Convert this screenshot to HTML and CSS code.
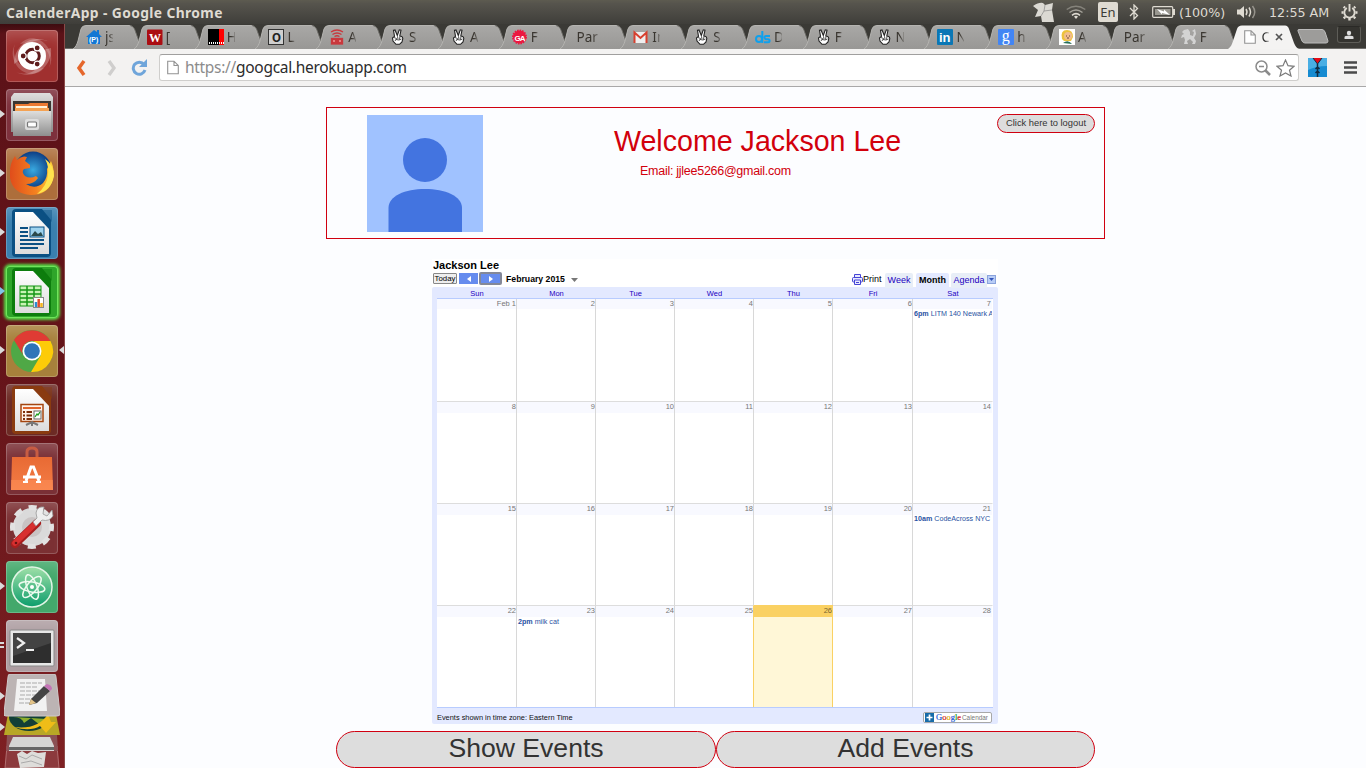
FILE: index.html
```html
<!DOCTYPE html>
<html lang="en">
<head>
<meta charset="utf-8">
<title>CalenderApp</title>
<link rel="stylesheet" href="styles.css">
</head>
<body>
<svg class="defs" width="0" height="0">
  <defs>
    <linearGradient id="tabFill" x1="0" y1="0" x2="0" y2="1"><stop offset="0" stop-color="#a9a8a6"/><stop offset="1" stop-color="#989795"/></linearGradient>
    <linearGradient id="metal" x1="0" y1="0" x2="0" y2="1"><stop offset="0" stop-color="#dededd"/><stop offset="1" stop-color="#8e8e8e"/></linearGradient>
    <linearGradient id="paper" x1="0" y1="0" x2="0" y2="1"><stop offset="0" stop-color="#fff"/><stop offset="1" stop-color="#dcdcdc"/></linearGradient>
    <linearGradient id="bag" x1="0" y1="0" x2="0" y2="1"><stop offset="0" stop-color="#e86a34"/><stop offset="1" stop-color="#f47c45"/></linearGradient>
    <linearGradient id="atom" x1="0" y1="0" x2="0" y2="1"><stop offset="0" stop-color="#9fe0a8"/><stop offset="1" stop-color="#0c9d6c"/></linearGradient>
    <linearGradient id="flame" x1="0" y1="0" x2="1" y2="0"><stop offset="0" stop-color="#e04d1b"/><stop offset=".6" stop-color="#f58220"/><stop offset="1" stop-color="#ffd83b"/></linearGradient>
    <radialGradient id="globe"><stop offset="0" stop-color="#39a9e0"/><stop offset="1" stop-color="#0d3e85"/></radialGradient>
  </defs>
  <symbol id="tab" viewBox="0 0 71 24"><path d="M0 24C3 22 4 19 5 16L8 4Q9 .5 13 .5H56Q59 .5 61 4L66 18Q68 23 71 24Z" fill="url(#tabFill)"/><path d="M0 24C3 22 4 19 5 16L8 4Q9 .5 13 .5H56Q59 .5 61 4L66 18Q68 23 71 24" fill="none" stroke="#b5b4b1" stroke-width="1"/><path d="M57 .5Q60 1 61.500 4L66.500 18Q68 22 70 24" fill="none" stroke="#6f6e6a"/></symbol>
  <symbol id="tabOn" viewBox="0 0 71 24"><path d="M0 24C3 22 4 19 5 16L9 4Q10 .5 14 .5H57Q60 .5 61 4L66 18Q68 23 71 24Z" fill="#f4f3f2"/></symbol>
  <symbol id="hand" viewBox="0 0 16 16"><path d="M3.500 1.300L5 1 7.300 6.500 9.300.8 11 1.200 9.800 7Q12.500 7 12.800 9.500L12 13 9.500 15.300H6L3 12 2.500 9 4.500 7.300Z" fill="#fff" stroke="#222" stroke-width="1.100"/><path d="M4 8.500L6.500 9.500 5 12M7.500 7.500L8 10M10 7.500L9.500 10.500M6 10.500L9 11 11.500 10" fill="none" stroke="#222" stroke-width=".8"/></symbol>
  <symbol id="page" viewBox="0 0 12 14"><path d="M.7.7H7L11.300 5V13.300H.7ZM7 .7V5H11.300" fill="#fff" stroke="#939393" stroke-width="1.100"/></symbol>
  <symbol id="doc" viewBox="0 0 52 52"><path d="M10 2H36L45 13V46Q45 50 41 50H10Q6 50 6 46V6Q6 2 10 2Z"/><path d="M33 3H46V15Z" opacity=".45"/><path d="M9 5H27L43 22V47H9Z" fill="url(#paper)"/></symbol>
</svg>

<header class="panel">
  <div class="window-title">CalenderApp - Google Chrome</div>
  <div class="tray">
    <svg class="t-note" width="22" height="20" viewBox="0 0 22 20"><path d="M0 4Q6 0 10 1L12 3 20 1 19 8 21 20 9 20 8 14 2 15 5 8Z" fill="#dbd9d3"/><path d="M12 3L11 9 19 8M11 9L8 14" fill="none" stroke="#888" stroke-width=".7"/></svg>
    <svg class="t-wifi" width="20" height="14" viewBox="0 0 20 14" fill="none"><path d="M.7 4.500Q10-2 19.300 4.500" stroke="#85837b" stroke-width="1.500"/><path d="M3.500 7.500Q10 2.500 16.500 7.500" stroke="#a5a29a" stroke-width="1.500"/><path d="M6 10.300Q10 7 14 10.300" stroke="#dfdbd2" stroke-width="1.500"/><path d="M8 11.500Q10 10 12 11.500L10 14Z" fill="#dfdbd2"/></svg>
    <span class="lang">En</span>
    <svg class="t-bt" width="10" height="16" viewBox="0 0 10 16"><path d="M1 4L8.500 11.500 5 15V1L8.500 4.500 1 12" fill="none" stroke="#dfdbd2" stroke-width="1.300"/></svg>
    <svg class="t-batt" width="24" height="12" viewBox="0 0 24 12"><rect x=".7" y=".7" width="20" height="10.600" rx="1" fill="none" stroke="#dfdbd2" stroke-width="1.200"/><rect x="3" y="3" width="15.500" height="6" fill="#99978f"/><path d="M22 3V9" stroke="#dfdbd2" stroke-width="2"/><path d="M5 3L12 5.500 12 3.500 18 9 10 7 10 8.500Z" fill="#fff"/></svg>
    <span class="batt-text">(100%)</span>
    <svg class="t-vol" width="20" height="14" viewBox="0 0 20 14"><path d="M0 4.500H3L7 1V13L3 9.500H0Z" fill="#dfdbd2"/><path d="M9 4Q11 7 9 10M12 2.500Q15 7 12 11.500" fill="none" stroke="#dfdbd2" stroke-width="1.500"/><path d="M15.500 1Q20 7 15.500 13" fill="none" stroke="#96938b" stroke-width="1.500"/></svg>
    <span class="clock">12:55 AM</span>
    <svg class="t-gear" width="17" height="17" viewBox="0 0 17 17" fill="none" stroke="#dfdbd2"><path d="M5.800 4A5.200 5.200 0 1 0 11.200 4M8.500 0V7.500" stroke-width="1.900"/><path d="M2.700 2.700L4 4M14.300 2.700L13 4M.5 8.500H2.500M14.500 8.500H16.500M2.700 14.300L4.200 12.800M14.300 14.300L12.800 12.800M8.500 14V16.500" stroke-width="2.400"/></svg>
  </div>
</header>

<div class="desktop">
  <nav class="launcher">
    <svg class="tile dash" viewBox="0 0 52 52"><path d="M8 34C8 16 24 3 44 12 28 5 15 18 15 29ZM45 18C47 36 28 51 10 42 24 48 39 37 37 20Z" fill="#fff" opacity=".25"/><path d="M14 14C28-2 53 18 43 38 48 24 36 10 21 13ZM38 38C24 54-1 34 9 14 4 28 16 42 31 39Z" fill="#fff" opacity=".2"/><circle cx="26" cy="26" r="14" fill="#fff"/><circle cx="26.500" cy="26" r="6.800" fill="none" stroke="#5e1b1c" stroke-width="3"/><g fill="#5e1b1c" stroke="#fff" stroke-width="1.200"><circle cx="17.200" cy="26" r="3"/><circle cx="31.200" cy="17.900" r="3"/><circle cx="31.200" cy="34.100" r="3"/></g></svg>
    <svg class="tile files" viewBox="0 0 52 52"><path d="M8 4H44L47 8V43H5V8Z" fill="url(#metal)"/><rect x="7" y="12" width="38" height="12" fill="#3b3732"/><path d="M9 20V15H22L24 14H42V21Z" fill="#ec7a32"/><path d="M10 17H41V21H10Z" fill="#fff3da"/><path d="M9 19H43V22H9Z" fill="#f4a253"/><path d="M7 22H45V47H7Z" fill="url(#metal)"/><rect x="19" y="30" width="14" height="11" rx="2" fill="#ddd"/><rect x="21.500" y="33" width="9" height="5" rx="1" fill="#fff" stroke="#777" stroke-width="1.200"/></svg>
    <svg class="tile firefox" viewBox="0 0 52 52"><circle cx="27" cy="22" r="18.500" fill="url(#globe)"/><path d="M4 24Q4 15 9 8L11 12Q16 7 21 9L19 13 24 17 24 20 18 21Q15 24 19 28 24 31 30 28L32 30Q28 36 20 36 29 42 37 35 42 29 41 21L45 13Q50 24 46 34 41 47 25 47 7 46 4 30Z" fill="url(#flame)"/><path d="M39 11Q48 17 48 28 45 43 31 46 41 38 42 27 43 18 39 11Z" fill="#ffe34d"/></svg>
    <svg class="tile writer" viewBox="0 0 52 52"><use href="#doc" fill="#0b5083"/><path d="M14 21H22M14 25H22M14 29H22M14 33H38M14 37H38M14 41H32" stroke="#0b5083" stroke-width="2"/><rect x="24" y="20" width="14" height="10" fill="#9fd3ee" stroke="#0b5083"/><path d="M25 29L29 24 32 27 35 25 37 29Z" fill="#2b4a4c"/></svg>
    <svg class="tile calc" viewBox="0 0 52 52"><use href="#doc" fill="#0d7d0d"/><rect x="14" y="20" width="21" height="20" fill="#c8f3b4" stroke="#159615"/><path d="M14 24H35M14 28H35M14 32H35M14 36H35M21 20V40M28 20V40" stroke="#159615" stroke-width="1.500"/><rect x="27.500" y="31.500" width="10" height="10" fill="#fff" stroke="#888"/><path d="M30 41V36" stroke="#2d8dd2" stroke-width="2.500"/><path d="M32.700 41V33" stroke="#e44b2b" stroke-width="2.500"/><path d="M35.500 41V37" stroke="#f5b51d" stroke-width="2.500"/></svg>
    <svg class="tile chrome" viewBox="0 0 52 52"><circle cx="26" cy="26" r="21" fill="#4fa846"/><path d="M8 15A21 21 0 0 1 44.200 16H26A10 10 0 0 0 17 30Z" fill="#df3b34"/><path d="M44.500 16A21 21 0 0 1 25 47L35 30Q37 20 27 16Z" fill="#fdcb08"/><circle cx="26" cy="26" r="9.500" fill="#fff"/><circle cx="26" cy="26" r="7.800" fill="#2f74b8"/></svg>
    <svg class="tile impress" viewBox="0 0 52 52"><use href="#doc" fill="#8a3b10"/><rect x="15" y="20.500" width="22" height="17" fill="#fff2e9" stroke="#a4450f" stroke-width="1.500"/><path d="M17 24H35" stroke="#df642b" stroke-width="2"/><path d="M17 28H26M17 31.500H26M17 35H26" stroke="#7d2d08" stroke-width="2" stroke-dasharray="2 1.500 6"/><rect x="28" y="27" width="7" height="8" fill="#fff" stroke="#666"/><path d="M29 33L31 30 32 31 34 28" fill="none" stroke="#20a020" stroke-width="1.300"/><path d="M20 41L26 38 32 41M26 38V42" fill="none" stroke="#777" stroke-width="2"/></svg>
    <svg class="tile software" viewBox="0 0 52 52"><path d="M21 16V9Q21 5 26 5T31 9V16" fill="none" stroke="#c75c43" stroke-width="3"/><path d="M6 14H46L47 47H5Z" fill="url(#bag)"/><path d="M5 37H47V47H5Z" fill="#ff925a" opacity=".5"/><path d="M20 38L25 24H27.500L33 38M17 34H35" fill="none" stroke="#fff" stroke-width="3"/><path d="M17 39H22M30 39H35" stroke="#fff" stroke-width="2"/></svg>
    <svg class="tile settings" viewBox="0 0 52 52"><circle cx="26" cy="25" r="13" fill="none" stroke="#dadada" stroke-width="12"/><circle cx="26" cy="25" r="19.500" fill="none" stroke="#e2e2e2" stroke-width="5" stroke-dasharray="8 7.315" stroke-dashoffset="4"/><circle cx="26" cy="25" r="10" fill="#c9c4c4"/><path d="M9 42L31 21" stroke="#a81f1f" stroke-width="8" stroke-linecap="round"/><path d="M9 41L31 20" stroke="#d83030" stroke-width="5.500" stroke-linecap="round"/><path d="M30 24L36 18Q43 20 47 14L46 8 41 14 37 12 38 5Q31 4 30 11L31 16 27 20Z" fill="#eee" stroke="#999" stroke-width=".8"/><circle cx="10" cy="41" r="1.300" fill="#611"/></svg>
    <svg class="tile atom" viewBox="0 0 52 52"><circle cx="26" cy="26" r="20" fill="url(#atom)" stroke="#e1f5e5" stroke-width="1.500"/><g fill="none" stroke="#edfbef" stroke-width="1.500"><ellipse cx="26" cy="26" rx="13" ry="5" transform="rotate(10 26 26)"/><ellipse cx="26" cy="26" rx="13" ry="5" transform="rotate(70 26 26)"/><ellipse cx="26" cy="26" rx="13" ry="5" transform="rotate(130 26 26)"/></g><circle cx="26" cy="26" r="2" fill="#fff"/></svg>
    <svg class="tile terminal" viewBox="0 0 52 52"><rect x="4" y="10" width="44" height="36" rx="1" fill="#e7e7e7" stroke="#888"/><rect x="7" y="13" width="38" height="30" fill="#2e2e2e"/><path d="M7 13H45V23L7 36Z" fill="#fff" opacity=".1"/><path d="M11 18L18 23 11 28" fill="none" stroke="#eee" stroke-width="2.200"/><path d="M20 30H28" stroke="#eee" stroke-width="2"/></svg>
    <svg class="folded" width="56" height="94" viewBox="0 0 56 94"><path d="M3 72H53L55 94H1Z" fill="#8c3a3d" stroke="#b06d6f"/><path d="M13 80L18 77 23 80 28 77 34 79 42 78 40 93 16 94Z" fill="#deddda"/><path d="M15 82L22 85 28 81 38 85M17 89L27 87 38 91" stroke="#aaa" fill="none"/><path d="M4 46H52L54 77H2Z" fill="#8b5054"/><path d="M9 63H46L50 72V77H5V72Z" fill="#d5d5d4"/><path d="M5 73H50V76H5Z" fill="#666"/><path d="M4 40H52L56 61H0Z" fill="#b8a726"/><ellipse cx="25" cy="43" rx="20" ry="14" fill="#123f37"/><path d="M9 43Q18 43 20 49L27 44 36 51 43 45Z" fill="#8dae2c"/><path d="M10 53Q34 56 44 40L47 48 52 48 42 59 36 52Q26 58 10 53Z" fill="#efbd18"/><path d="M6 0H50Q52 0 52 3L56 40Q56 42 53 42H2Q-1 42 0 39L4 3Q4 0 6 0Z" fill="#bcb4b4" stroke="#d0caca"/><path d="M13 5H41L43 37H10Z" fill="#f2f2f2"/><path d="M16 9H38M16 13H34M16 17H37M16 21H35M15 25H31M15 29H28" stroke="#aaa" stroke-width="1.200" stroke-dasharray="5 1"/><path d="M25 31L27 25 40 12 46 17 33 29Z" fill="#444"/><path d="M40 12L43 10Q48 11 48 15L46 17Z" fill="#c474b6"/><path d="M25 31L27 25 32 29Z" fill="#e4c488"/></svg>
    <svg class="marks" width="65" height="744" viewBox="0 0 65 744" fill="#dadada"><path d="M0 86L5 90 0 94ZM0 145L5 149 0 153ZM0 204L5 208 0 212ZM0 322L5 326 0 330ZM64 322L59 326 64 330ZM0 558L5 562 0 566ZM0 668L5 672 0 676ZM0 699L5 703 0 707ZM0 618H4V620H0ZM0 622H4V624H0Z"/><path d="M0 263L5 267 0 271Z" fill="#7fc6e8"/></svg>
  </nav>

  <div class="browser">
    <div class="tabs">
      <div class="tab"><svg class="shape"><use href="#tab"/></svg><svg class="fav" viewBox="0 0 16 16"><path d="M0 8L8 1 11 3V1H13V5L16 8H14V15H2V8Z" fill="#1277d4"/><text x="3" y="13" class="ico-p">(P)</text></svg><span class="label">js</span></div>
      <div class="tab"><svg class="shape"><use href="#tab"/></svg><svg class="fav" viewBox="0 0 16 16"><rect y=".5" width="15.500" height="15.500" rx="1" fill="#ab0d12"/><text x="2" y="13" class="ico-w">W</text></svg><span class="label">[</span></div>
      <div class="tab"><svg class="shape"><use href="#tab"/></svg><svg class="fav" viewBox="0 0 16 16"><path d="M0 0H11V16H0Z"/><path d="M11 0H16V16H11Z" fill="#f00"/><path d="M1 14H16" stroke="#fff" stroke-width="2" stroke-dasharray="1 1"/></svg><span class="label">H</span></div>
      <div class="tab"><svg class="shape"><use href="#tab"/></svg><svg class="fav" viewBox="0 0 16 16"><rect x=".5" y=".5" width="15" height="15" fill="#cfcfcf" stroke="#333"/><text x="4" y="13" class="ico-o">O</text></svg><span class="label">L</span></div>
      <div class="tab"><svg class="shape"><use href="#tab"/></svg><svg class="fav" viewBox="0 0 16 16" fill="none" stroke="#c9383d" stroke-width="1.300"><path d="M2 3Q8-1 14 3M3.500 5.500Q8 2.500 12.500 5.500M5.500 7.500Q8 6 10.500 7.500"/><rect x="2.500" y="9.500" width="11" height="5.500" fill="#c9383d"/><path d="M4 12H6M10 12H12" stroke="#ee9898"/></svg><span class="label">A</span></div>
      <div class="tab"><svg class="shape"><use href="#tab"/></svg><svg class="fav"><use href="#hand"/></svg><span class="label">S</span></div>
      <div class="tab"><svg class="shape"><use href="#tab"/></svg><svg class="fav"><use href="#hand"/></svg><span class="label">A</span></div>
      <div class="tab"><svg class="shape"><use href="#tab"/></svg><svg class="fav" viewBox="0 0 16 16"><circle cx="7.500" cy="8" r="6.500" fill="#ec1840" stroke="#ec1840" stroke-width="2" stroke-dasharray="1.500 1"/><text x="2.600" y="11.500" class="ico-ga">GA</text></svg><span class="label">F</span></div>
      <div class="tab no-icon"><svg class="shape"><use href="#tab"/></svg><span class="label">Par</span></div>
      <div class="tab"><svg class="shape"><use href="#tab"/></svg><svg class="fav" viewBox="0 0 16 16"><path d="M1 3H14V14H1Z" fill="#eee"/><path d="M1.500 14V3.500L7.500 9 13.500 3.500V14" fill="none" stroke="#d7402f" stroke-width="2"/></svg><span class="label">In</span></div>
      <div class="tab"><svg class="shape"><use href="#tab"/></svg><svg class="fav"><use href="#hand"/></svg><span class="label">S</span></div>
      <div class="tab"><svg class="shape"><use href="#tab"/></svg><svg class="fav" viewBox="0 0 16 16"><g fill="none" stroke="#10a0ec" stroke-width="2"><circle cx="4" cy="10" r="3"/><path d="M7.300 2V14M15 7H11Q9.500 7 9.500 8.500T11 10.300H13Q14.600 10.300 14.600 11.800T13 13.300H9"/></g></svg><span class="label">D</span></div>
      <div class="tab"><svg class="shape"><use href="#tab"/></svg><svg class="fav"><use href="#hand"/></svg><span class="label">F</span></div>
      <div class="tab"><svg class="shape"><use href="#tab"/></svg><svg class="fav"><use href="#hand"/></svg><span class="label">N</span></div>
      <div class="tab"><svg class="shape"><use href="#tab"/></svg><svg class="fav" viewBox="0 0 16 16"><rect width="16" height="16" rx="1" fill="#0a77b5"/><text x="2" y="13" class="ico-in">in</text></svg><span class="label">N</span></div>
      <div class="tab"><svg class="shape"><use href="#tab"/></svg><svg class="fav" viewBox="0 0 16 16"><rect width="16" height="16" rx="1" fill="#4285f4"/><text x="3.700" y="11.500" class="ico-g">g</text></svg><span class="label">h</span></div>
      <div class="tab"><svg class="shape"><use href="#tab"/></svg><svg class="fav" viewBox="0 0 16 16"><path d="M0 0H16V16H0Z" fill="#fff"/><path d="M3 10Q1 1 8 1 14 1 14 8L12 12H5Z" fill="#edc23d"/><circle cx="9" cy="7" r="4" fill="#f1bd8e"/><path d="M4 14Q9 10 13 15Z" fill="#276f58"/><path d="M7 7H8M10 7H11M8 9H10" stroke="#643"/></svg><span class="label">A</span></div>
      <div class="tab no-icon"><svg class="shape"><use href="#tab"/></svg><span class="label">Par</span></div>
      <div class="tab"><svg class="shape"><use href="#tab"/></svg><svg class="fav" viewBox="0 0 16 16"><path d="M3 1L7 0 9 3 9 6 12 7 13 3 11 2 14 0 15 5 13 9 15 12 14 15H11L12 13 9 10 6 12 7 15H3L4 11 3 8 0 9 1 6 3 5 1 3Z" fill="#d3d3d3"/></svg><span class="label">F</span></div>
      <div class="tab active"><svg class="shape"><use href="#tabOn"/></svg><svg class="fav page-fav"><use href="#page"/></svg><span class="label">C</span><svg class="close" width="8" height="8" viewBox="0 0 8 8"><path d="M1 1L7 7M7 1L1 7" stroke="#555" stroke-width="1.700"/></svg></div>
      <svg class="new-tab" width="32" height="15" viewBox="0 0 32 15"><path d="M2 .5H25Q27 .5 28 3L31 12Q31 14 29 14H8Q6 14 5 12L1 2Q.5.500 2 .5Z" fill="#9d9c9a" stroke="#bbb"/></svg>
      <div class="user-btn"><svg width="10" height="10" viewBox="0 0 10 10" fill="#dedede"><circle cx="5" cy="3" r="2.200"/><path d="M.5 9V7Q1 5.500 5 5.500T9.500 7V9Z"/></svg></div>
    </div>

    <div class="toolbar">
      <svg class="nav-back" width="12" height="18" viewBox="0 0 12 18"><path d="M9 2L4 9 9 16" fill="none" stroke="#e5672c" stroke-width="3.500"/></svg>
      <svg class="nav-fwd" width="12" height="18" viewBox="0 0 12 18"><path d="M3 2L8 9 3 16" fill="none" stroke="#cfcecd" stroke-width="3.300"/></svg>
      <svg class="nav-reload" width="17" height="17" viewBox="0 0 17 17"><path d="M13 5.500A6 6 0 1 0 14 11" fill="none" stroke="#6fa5da" stroke-width="3"/><path d="M16 0V8H8Z" fill="#6fa5da"/></svg>
      <div class="omnibox">
        <svg width="12" height="15"><use href="#page" width="12" height="15"/></svg>
        <span class="url"><span class="scheme">https://</span>googcal.herokuapp.com</span>
        <svg class="zoom-ico" width="16" height="16" viewBox="0 0 16 16" fill="none" stroke="#8b8b8b"><circle cx="6.500" cy="6.500" r="5.500" stroke-width="1.500"/><path d="M4 6.500H9" stroke-width="1.500"/><path d="M10.500 10.500L15 15" stroke-width="2.500"/></svg>
        <svg class="star" width="19" height="18" viewBox="0 0 19 18"><path d="M9.500 1L12 6.700 18 7.300 13.500 11.200 15 17 9.500 13.900 4 17 5.500 11.200 1 7.300 7 6.700Z" fill="#fff" stroke="#7b7b7b" stroke-width="1.200"/></svg>
      </div>
      <svg class="ext" width="19" height="19" viewBox="0 0 19 19"><rect width="19" height="19" fill="#168bd1"/><path d="M0 0H19V8Q8 8 0 12Z" fill="#48aee4"/><path d="M5 0H14L9.500 6Z" fill="#e60a16"/><path d="M5 0L9.500 6 14 0" fill="none" stroke="#102b42"/><path d="M9.500 6V19M7.500 11L9.500 9 11.500 11M7.500 15L9.500 13 11.500 15" fill="none" stroke="#102b42" stroke-width="1.500"/></svg>
      <svg class="menu" width="13" height="13" viewBox="0 0 13 13"><path d="M0 1.500H13M0 6.500H13M0 11.500H13" stroke="#4a4a4a" stroke-width="2.700"/></svg>
    </div>

    <main class="page">
      <section class="profile">
        <svg class="avatar" width="116" height="117" viewBox="0 0 116 117"><rect width="116" height="117" fill="#a0c2ff"/><circle cx="58" cy="45" r="22" fill="#4374e0"/><path d="M21.500 117V93C21.500 81 38 74 58 74S95 81 95 93V117Z" fill="#4374e0"/></svg>
        <div class="greeting"><h1>Welcome Jackson Lee</h1><p>Email: jjlee5266@gmail.com</p></div>
        <button class="logout">Click here to logout</button>
      </section>

      <section class="calendar">
        <h2>Jackson Lee</h2>
        <div class="cal-bar">
          <span class="today">Today</span>
          <span class="step"><svg width="4" height="6"><path d="M4 0L0 3 4 6Z" fill="#fff"/></svg></span>
          <span class="step focus"><svg width="4" height="6"><path d="M0 0L4 3 0 6Z" fill="#fff"/></svg></span>
          <b class="month">February 2015</b>
          <svg class="drop" width="7" height="4"><path d="M0 0H7L3.500 4Z" fill="#777"/></svg>
          <svg class="printer" width="11" height="11" viewBox="0 0 11 11" fill="#e8eaff" stroke="#4544d5"><path d="M2.500 4V.5H8.500V4"/><rect x=".5" y="3.500" width="10" height="4.500" rx="1"/><path d="M2.500 6H8.500V10.500H2.500ZM4 8.500H7"/></svg>
          <span class="print">Print</span>
          <span class="view week">Week</span><span class="view current">Month</span><span class="view agenda">Agenda</span>
          <span class="view-drop"><svg width="5" height="3"><path d="M0 0H5L2.500 3Z" fill="#3355bb"/></svg></span>
        </div>
        <div class="cal-body">
          <div class="days"><span>Sun</span><span>Mon</span><span>Tue</span><span>Wed</span><span>Thu</span><span>Fri</span><span>Sat</span></div>
          <div class="grid">
            <div class="cell"><i>Feb 1</i></div><div class="cell"><i>2</i></div><div class="cell"><i>3</i></div><div class="cell"><i>4</i></div><div class="cell"><i>5</i></div><div class="cell"><i>6</i></div><div class="cell"><i>7</i><p><b>6pm</b> LITM 140 Newark A</p></div>
            <div class="cell"><i>8</i></div><div class="cell"><i>9</i></div><div class="cell"><i>10</i></div><div class="cell"><i>11</i></div><div class="cell"><i>12</i></div><div class="cell"><i>13</i></div><div class="cell"><i>14</i></div>
            <div class="cell"><i>15</i></div><div class="cell"><i>16</i></div><div class="cell"><i>17</i></div><div class="cell"><i>18</i></div><div class="cell"><i>19</i></div><div class="cell"><i>20</i></div><div class="cell"><i>21</i><p><b>10am</b> CodeAcross NYC</p></div>
            <div class="cell"><i>22</i></div><div class="cell"><i>23</i><p><b>2pm</b> milk cat</p></div><div class="cell"><i>24</i></div><div class="cell before-now"><i>25</i></div><div class="cell now"><i>26</i></div><div class="cell"><i>27</i></div><div class="cell"><i>28</i></div>
          </div>
          <div class="cal-foot"><span>Events shown in time zone: Eastern Time</span>
            <span class="gcal"><svg width="9" height="9" viewBox="0 0 9 9"><rect width="9" height="9" fill="#176ba9"/><path d="M4.500 1.500V7.500M1.500 4.500H7.500" stroke="#fff" stroke-width="1.700"/></svg><span class="g-logo"><span class="c-b">G</span><span class="c-r">o</span><span class="c-y">o</span><span class="c-b">g</span><span class="c-g">l</span><span class="c-r">e</span></span><span class="g-cal">Calendar</span></span>
          </div>
        </div>
      </section>

      <div class="actions"><button>Show Events</button><button>Add Events</button></div>
    </main>
  </div>
</div>
</body>
</html>
```
FILE: styles.css
```css
* { box-sizing: border-box; }
body { margin: 0; width: 1366px; height: 768px; overflow: hidden; font-family: "Liberation Sans", Arial, sans-serif; }
svg { display: block; flex: none; }
.defs { position: absolute; }
h1, h2, p { margin: 0; font-weight: normal; }
button { font-family: inherit; padding: 0; }

/* top panel */
.panel { height: 24px; display: flex; justify-content: space-between; align-items: center; background: linear-gradient(#5d5b50, #56544d 15%, #3f3e3a); color: #dfdbd2; font-family: "Noto Sans", sans-serif; }
.window-title { padding-left: 6px; font-size: 13.8px; letter-spacing: .4px; font-weight: bold; white-space: nowrap; }
.tray { display: flex; align-items: center; width: 333px; height: 24px; font-size: 13px; white-space: nowrap; }
.t-wifi { margin-left: 11px; }
.lang { margin-left: 12px; width: 20px; height: 20px; background: #dfdbd2; color: #3c3b37; border-radius: 2px; text-align: center; line-height: 20px; }
.t-bt { margin-left: 11px; }
.t-batt { margin-left: 13px; }
.batt-text { margin-left: 3px; width: 48px; font-family: "DejaVu Sans", sans-serif; font-size: 12.7px; }
.t-vol { margin-left: 10px; }
.clock { margin-left: 12px; width: 62px; font-family: "DejaVu Sans", sans-serif; font-size: 12.7px; }
.t-gear { margin-left: 10px; }

.desktop { display: flex; height: 744px; }

/* launcher */
.launcher { position: relative; width: 65px; padding: 6px 0 0 6px; display: flex; flex-direction: column; gap: 7px; background: linear-gradient(#3d0c10, #5c1218 10px, #641419 45%, #7e2023); border-right: 1px solid #8b4a49; overflow: hidden; }
.tile { width: 52px; height: 52px; border-radius: 4px; background: #7a3036; box-shadow: inset 0 0 0 1px rgba(255,255,255,.2), inset 0 14px 14px -8px rgba(255,255,255,.2); }
.dash { background: #a0302f; }
.files { background: #7d303c; }
.firefox { background: #ad6e3b; }
.writer { background: #397faf; }
.calc { background: #2fa52a; box-shadow: 0 0 3px 2px #55dc46, inset 0 0 0 1px #71e45b; }
.chrome { background: #a7803b; }
.impress { background: #6c2a24; }
.settings { background: #7b3033; }
.atom { background: #43a86b; }
.terminal { background: #ae9ea2; }
.folded { margin: -5px 0 0 -2px; }
.marks { position: absolute; left: 0; top: 0; }

/* browser */
.browser { flex: 1; display: flex; flex-direction: column; background: #fcfdff; min-width: 0; }
.tabs { height: 25px; padding-left: 8px; display: flex; align-items: flex-start; background: #3b3a36; border-bottom: 1px solid #6f6e6b; }
.tab { position: relative; flex: none; width: 71px; height: 24px; margin-right: -10.2px; padding: 0 0 0 13px; display: flex; align-items: center; gap: 3px; font: 13.5px "Noto Sans", sans-serif; color: #3a3630; }
.tab .shape { position: absolute; left: 0; top: 1px; width: 71px; height: 24px; }
.fav { position: relative; width: 16px; height: 16px; margin-top: 2px; }
.label { position: relative; width: 8px; overflow: hidden; white-space: nowrap; margin-top: 1px; -webkit-mask: linear-gradient(90deg, #000 50%, rgba(0,0,0,.25)); }
.no-icon { padding-left: 17px; }
.no-icon .label { width: 23px; -webkit-mask: linear-gradient(90deg, #000 65%, rgba(0,0,0,.25)); }
.active { padding-left: 16px; gap: 5px; color: #333; }
.active .page-fav { width: 12px; height: 14px; }
.close { position: relative; margin: 2px 0 0 1px; }
.new-tab { margin: 5px 0 0 8px; }
.user-btn { margin: 2px 0 0 8px; width: 24px; height: 17px; border: 1px solid #5e5d58; border-top-color: #2a2926; border-radius: 3px; background: #34332f; display: flex; align-items: center; justify-content: center; flex: none; }
.ico-p { font: bold 7px "Liberation Sans"; fill: #fff; }
.ico-w { font: bold 12px "Liberation Serif"; fill: #fff; }
.ico-o { font: bold 13px Roboto; fill: #222; }
.ico-ga { font: bold 8px "Liberation Sans"; fill: #fff; letter-spacing: -1px; }
.ico-in { font: bold 13px "Liberation Sans"; fill: #fff; }
.ico-g { font: 16px "Liberation Serif"; fill: #fff; }

.toolbar { height: 38px; background: #f3f2f1; border-bottom: 1px solid #a9a8a8; display: flex; align-items: center; padding-left: 10px; }
.nav-fwd { margin-left: 19px; }
.nav-reload { margin-left: 13px; }
.omnibox { margin-left: 11px; width: 1140px; height: 27px; display: flex; align-items: center; padding-left: 7px; background: #fff; border: 1px solid #cfcecc; border-top: 1px solid #a09f9e; border-radius: 3px; }
.url { margin: -2px 0 0 6px; flex: 1; font: 15.5px "Noto Sans", sans-serif; letter-spacing: -.3px; color: #2c2c2c; white-space: nowrap; }
.scheme { color: #8c8c8c; }
.star { margin: 0 3px 0 5px; }
.ext { margin-left: 9px; }
.menu { margin-left: 17px; }

/* page */
.page { flex: 1; padding-top: 20px; display: flex; flex-direction: column; }
.profile { margin-left: 261px; width: 779px; height: 132px; border: 1px solid #d00010; display: flex; align-items: flex-start; padding: 7px 9px 0 40px; }
.greeting { margin-left: 131px; width: 288px; color: #d2000c; white-space: nowrap; }
.greeting h1 { font-size: 28.6px; line-height: 34px; margin-top: 9px; }
.greeting p { font-size: 12.5px; letter-spacing: -.27px; line-height: 16px; margin: 5px 0 0 26px; }
.logout { margin: -1px 0 0 auto; width: 98px; height: 19px; border: 1px solid #d00010; border-radius: 10px; background: #ddd; color: #333; font-size: 9.35px; line-height: 16px; padding-bottom: 1px; white-space: nowrap; }

.calendar { margin: 20px 0 0 367px; width: 566px; height: 464px; background: #fff; }
.calendar h2 { margin-left: 1px; font-size: 11px; font-weight: bold; line-height: 13px; height: 13px; }
.cal-bar { display: flex; align-items: center; height: 15px; padding: 0 0 2px 1px; font-size: 9px; white-space: nowrap; }
.today { width: 24px; height: 11px; border: 1px solid #888; background: #eee; line-height: 9px; text-align: center; font-size: 7.8px; border-radius: 1px; }
.step { width: 19px; height: 11px; margin-left: 2px; background: #668cee; display: flex; align-items: center; justify-content: center; }
.step.focus { width: 23px; height: 13px; margin-left: 1px; border: 2px solid #848898; border-radius: 2px; }
.month { margin-left: 4px; font-size: 8.7px; width: 59px; }
.drop { margin: 3px 0 0 6px; }
.printer { margin: 1px 0 0 274px; }
.print { width: 19px; }
.view { margin: 3px 0 0 2px; height: 15px; line-height: 15px; border-radius: 2px 2px 0 0; background: #e8eef7; color: #2200c1; text-align: center; }
.week { width: 28px; margin-left: 3px; }
.current { width: 33px; margin-left: 3px; background: #e3e9ff; color: #000; font-weight: bold; }
.agenda { width: 36px; }
.view-drop { width: 9px; height: 9px; margin-top: 2px; background: #b9cdf6; border: 1px solid #8aa3dc; display: flex; align-items: center; justify-content: center; }
.cal-body { background: #e3e9ff; padding: 0 5px; border-radius: 2px; height: 437px; }
.days, .grid { display: grid; grid-template-columns: 80px 79px 79px 79px 79px 80px 80px; }
.days { height: 12px; border-bottom: 1px solid #b8ccff; color: #2200c1; font-size: 7.5px; line-height: 13px; text-align: center; }
.grid { grid-auto-rows: 102px; background: #fff; border-bottom: 1px solid #b8ccff; height: 409px; }
.cell { border-right: 1px solid #d8d8d8; border-top: 1px solid #ddd; overflow: hidden; }
.cell:nth-child(-n+7) { border-top: 0; }
.cell:nth-child(-n+7) p { margin-top: 1px; }
.cell:nth-child(-n+7) i { height: 10px; }
.cell:nth-child(7n) { border-right: 1px solid #fff; }
.cell i { display: block; height: 11px; padding-right: 0; background: #f8f9ff; color: #777; font-style: normal; font-size: 7.5px; line-height: 10px; text-align: right; }
.cell:nth-child(7n) i { padding-right: 1px; }
.cell p { font-size: 7.15px; line-height: 9px; padding-left: 1px; color: #2952a3; white-space: nowrap; }
.cell:nth-child(n+22) p { margin-top: 1px; }
.before-now, .now { border-right-color: #fad163; }
.now { background: #fff7d7; border-top-color: #fad163; }
.now i { background: #fad163; color: #776633; }
.cal-foot { display: flex; justify-content: space-between; align-items: center; height: 16px; padding-top: 3px; font-size: 7.4px; color: #111; }
.gcal { width: 69px; height: 11px; margin-right: 1px; padding: 0 1px; display: flex; align-items: center; border: 1px solid #a8a8a8; border-radius: 2px; background: #fff; white-space: nowrap; }
.g-logo { font: 8.5px/9px "Liberation Serif", serif; margin-left: 2px; width: 25px; -webkit-text-stroke: .2px; }
.g-cal { font-size: 6.4px; color: #777; margin-left: 1px; }
.c-b { color: #1a56d6; } .c-r { color: #d02020; } .c-y { color: #e0a800; } .c-g { color: #149b28; }

.actions { display: flex; margin: 8px 0 0 271px; }
.actions button { width: 380px; height: 37px; border: 1px solid #d00010; border-radius: 19px; background: #ddd; color: #333; font-size: 26.6px; line-height: 32px; padding-bottom: 3px; }
.actions button + button { width: 379px; }
```
